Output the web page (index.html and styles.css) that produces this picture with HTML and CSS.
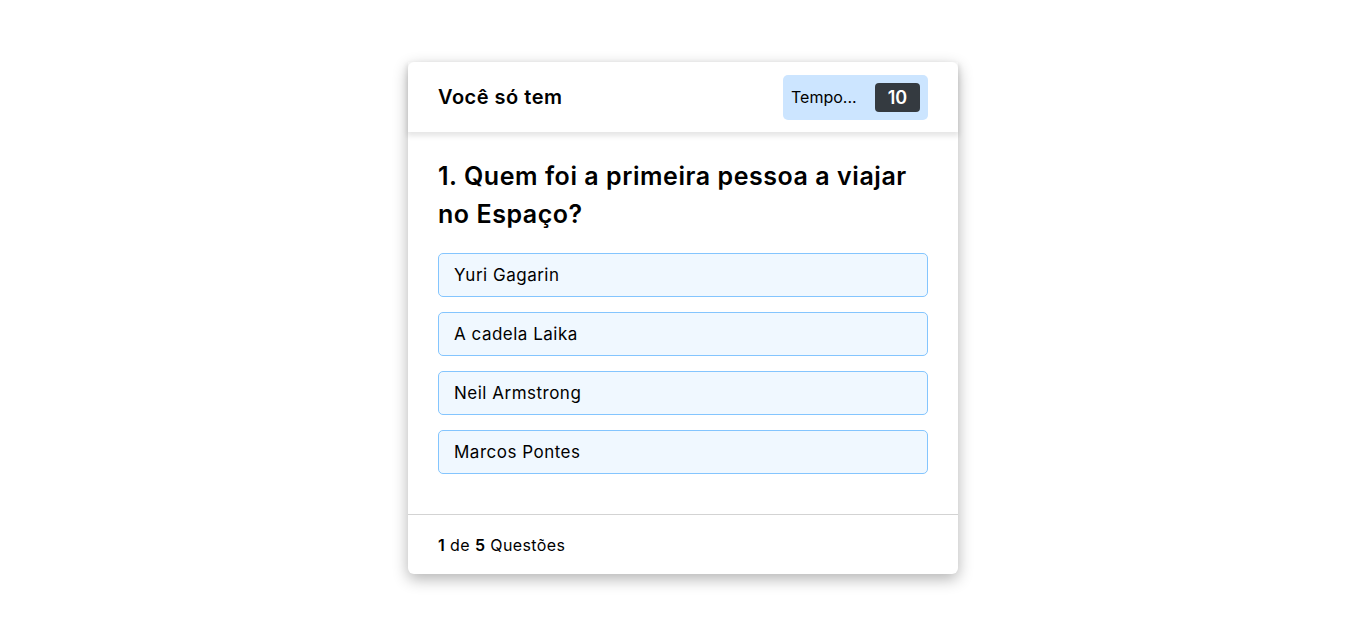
FILE: index.html
```html
<!DOCTYPE html>
<html lang="pt-BR">
<head>
<meta charset="utf-8">
<title>Quiz</title>
<link rel="stylesheet" href="styles.css">
</head>
<body>
<div class="quiz">
  <header class="quiz-header">
    <div class="title">Você só tem</div>
    <div class="timer">
      <span class="timer-label">Tempo...</span>
      <span class="timer-sec">10</span>
    </div>
  </header>
  <section class="quiz-body">
    <h2 class="question">1. Quem foi a primeira pessoa a viajar no Espaço?</h2>
    <div class="options">
      <div class="option">Yuri Gagarin</div>
      <div class="option">A cadela Laika</div>
      <div class="option">Neil Armstrong</div>
      <div class="option">Marcos Pontes</div>
    </div>
  </section>
  <footer class="quiz-footer">
    <p><b>1</b> de <b>5</b> Questões</p>
  </footer>
</div>
</body>
</html>
```
FILE: styles.css
```css
* { box-sizing: border-box; margin: 0; padding: 0; }
html, body { height: 100%; }
body {
  background: #fff;
  font-family: "Inter", "Noto Sans", sans-serif;
  color: #000;
  display: flex;
  justify-content: center;
  align-items: flex-start;
  padding-top: 62px;
}
.quiz {
  width: 550px;
  background: #fff;
  border-radius: 6px;
  box-shadow: 0 5px 15px rgba(0,0,0,0.3);
}
.quiz-header {
  height: 70px;
  padding: 0 30px;
  display: flex;
  align-items: center;
  justify-content: space-between;
  box-shadow: 0 3px 5px 1px rgba(0,0,0,0.1);
  position: relative;
  z-index: 1;
}
.title {
  font-size: 20px;
  font-weight: 600;
  letter-spacing: 0.5px;
}
.timer {
  width: 145px;
  height: 45px;
  background: #cce5ff;
  border-radius: 5px;
  display: flex;
  align-items: center;
  justify-content: space-between;
  padding: 0 8px;
}
.timer-label {
  font-size: 16px;
  font-weight: 400;
}
.timer-sec {
  width: 45px;
  height: 29px;
  background: #343a40;
  color: #fff;
  border-radius: 4px;
  font-size: 18px;
  font-weight: 600;
  display: flex;
  align-items: center;
  justify-content: center;
}
.quiz-body {
  padding: 25px 30px 40px;
}
.question {
  font-size: 25px;
  font-weight: 600;
  line-height: 38px;
  letter-spacing: 0.55px;
}
.options {
  margin-top: 20px;
  display: flex;
  flex-direction: column;
  gap: 15px;
}
.option {
  height: 44px;
  background: aliceblue;
  border: 1px solid #84c5fe;
  border-radius: 5px;
  padding: 0 15px;
  display: flex;
  align-items: center;
  font-size: 17px;
  letter-spacing: 0.5px;
}
.quiz-footer {
  height: 60px;
  border-top: 1px solid lightgrey;
  padding: 0 30px;
  display: flex;
  align-items: center;
  font-size: 16px;
  letter-spacing: 0.4px;
}
.quiz-footer b { font-weight: 600; }
```
